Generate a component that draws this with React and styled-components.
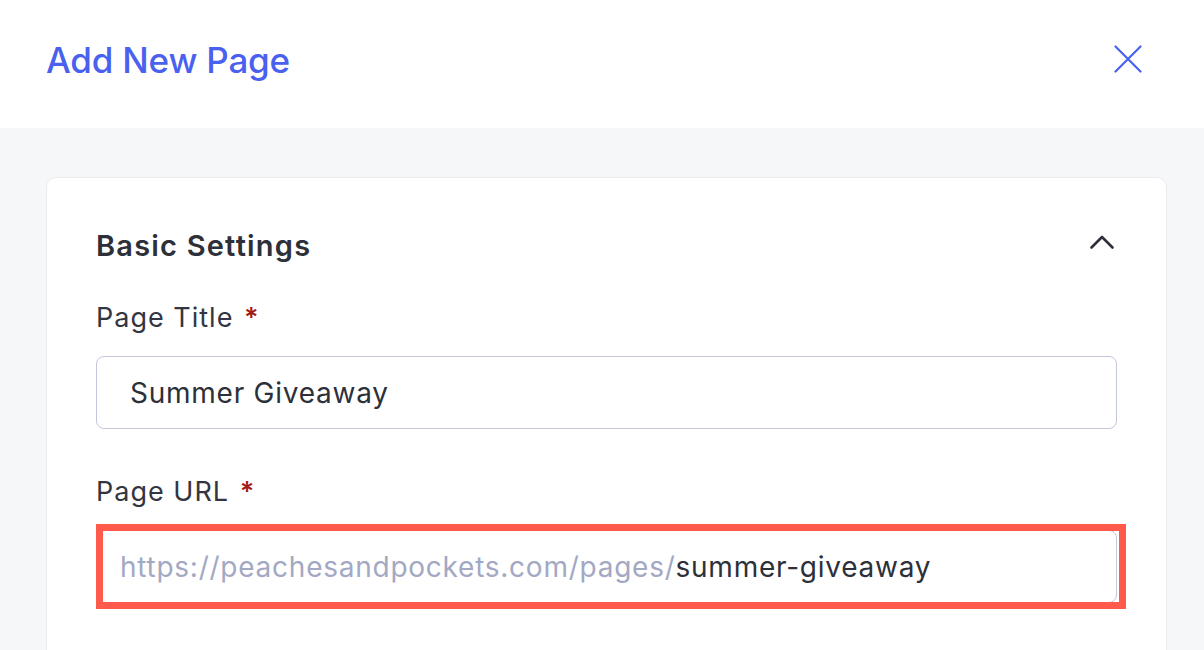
import React from "react";
import styled, { createGlobalStyle } from "styled-components";

const GlobalStyle = createGlobalStyle`
  html, body {
    margin: 0;
    padding: 0;
    background: #f6f7f9;
    font-family: Inter, "Noto Sans", "Liberation Sans", sans-serif;
    -webkit-font-smoothing: antialiased;
  }
`;

function CloseIcon() {
  return (
    <svg width="28" height="28" viewBox="0 0 28 28" fill="none">
      <path d="M1.5 1.5 L26.5 26.5 M26.5 1.5 L1.5 26.5" stroke="#4a61ef" strokeWidth="2.2" strokeLinecap="round" />
    </svg>
  );
}

function ChevronUp() {
  return (
    <svg width="26" height="16" viewBox="0 0 26 16" fill="none">
      <path d="M2.5 13.5 L13 3 L23.5 13.5" stroke="#2d3039" strokeWidth="2.6" strokeLinecap="round" strokeLinejoin="round" />
    </svg>
  );
}

function App() {
  return (
    <Page>
      <GlobalStyle />
      <Header>
        <Title>Add New Page</Title>
        <CloseButton>
          <CloseIcon />
        </CloseButton>
      </Header>
      <Body>
        <Card>
          <CardHead>
            <CardTitle>Basic Settings</CardTitle>
            <Toggle>
              <ChevronUp />
            </Toggle>
          </CardHead>
          <Field>
            <Label>
              Page Title <Required>*</Required>
            </Label>
            <InputBox $pad={33}>
              <Value>Summer Giveaway</Value>
            </InputBox>
          </Field>
          <Field>
            <Label>
              Page URL <Required>*</Required>
            </Label>
            <Highlighted>
              <InputBox $pad={23}>
                <Prefix>https://peachesandpockets.com/pages/</Prefix>
                <Value>summer-giveaway</Value>
              </InputBox>
              <Marker />
            </Highlighted>
          </Field>
        </Card>
      </Body>
    </Page>
  );
}

export default App;

const Page = styled.div`
  width: 1204px;
  height: 650px;
  overflow: hidden;
  background: #f6f7f9;
`;

const Header = styled.div`
  height: 128px;
  background: #fff;
  display: flex;
  align-items: center;
  justify-content: space-between;
  padding: 0 62px 0 46px;
  box-sizing: border-box;
`;

const Title = styled.h1`
  margin: 0;
  margin-top: -8px;
  font-size: 35px;
  font-weight: 500;
  color: #4a61ef;
  letter-spacing: -0.2px;
`;

const CloseButton = styled.div`
  display: flex;
  margin-top: -10px;
`;

const Body = styled.div`
  padding: 49px 37px 0 46px;
`;

const Card = styled.div`
  background: #fff;
  border: 1px solid #eaecf0;
  border-radius: 10px;
  padding: 51px 49px 60px 49px;
`;

const CardHead = styled.div`
  display: flex;
  align-items: center;
  justify-content: space-between;
  height: 32px;
  margin-bottom: 42px;
`;

const CardTitle = styled.h2`
  margin: 0;
  font-size: 29px;
  font-weight: 600;
  color: #2d3039;
  letter-spacing: 1.2px;
`;

const Toggle = styled.div`
  display: flex;
  margin-right: 2px;
  margin-top: -7px;
`;

const Field = styled.div`
  & + & {
    margin-top: 48px;
  }
`;

const Label = styled.div`
  font-size: 27px;
  line-height: 30px;
  color: #333642;
  margin-bottom: 23px;
  letter-spacing: 1px;
`;

const Required = styled.span`
  color: #a31b1b;
  font-weight: 600;
  letter-spacing: 0;
  margin-left: 2px;
`;

const InputBox = styled.div`
  height: 73px;
  box-sizing: border-box;
  border: 1px solid #c3c7db;
  border-radius: 8px;
  display: flex;
  align-items: center;
  padding-left: ${(p) => p.$pad}px;
  font-size: 28px;
  letter-spacing: 0.75px;
  background: #fff;
`;

const Value = styled.span`
  color: #2d3039;
`;

const Prefix = styled.span`
  color: #a3a8c3;
`;

const Highlighted = styled.div`
  position: relative;
`;

const Marker = styled.div`
  position: absolute;
  left: 0;
  top: -6px;
  right: -9px;
  bottom: -6px;
  border: 7px solid #ff5a4c;
  pointer-events: none;
`;
